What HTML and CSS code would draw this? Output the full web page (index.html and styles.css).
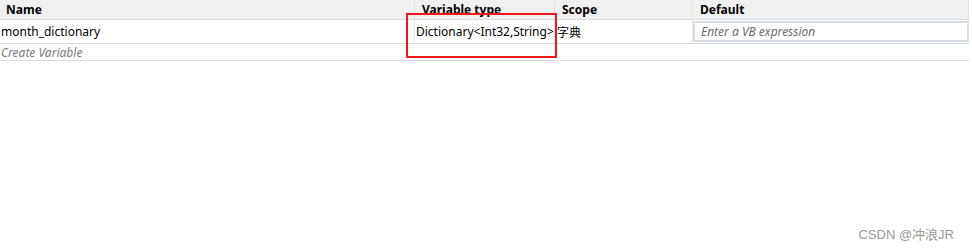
FILE: index.html
```html
<!DOCTYPE html>
<html lang="en">

<head>
    <meta charset="UTF-8">
    <title>Variables</title>
    <link rel="stylesheet" href="styles.css">
</head>

<body>
    <div class="vars">
        <div class="row head">
            <div class="cell name">Name</div>
            <div class="cell type">Variable type</div>
            <div class="cell scope">Scope</div>
            <div class="cell def">Default</div>
        </div>
        <div class="row item">
            <div class="cell name">month_dictionary</div>
            <div class="cell type">Dictionary&lt;Int32,String&gt;</div>
            <div class="cell scope">字典</div>
            <div class="cell def"><div class="expr">Enter a VB expression</div></div>
        </div>
        <div class="row create">
            <div class="cell name">Create Variable</div>
        </div>
        <div class="mark"></div>
    </div>
    <div class="watermark">CSDN @冲浪JR</div>
</body>

</html>
```

FILE: styles.css
```css
* {
    margin: 0;
    padding: 0;
    box-sizing: border-box;
}

body {
    font-family: 'Noto Sans', 'Noto Sans CJK SC', sans-serif;
    font-size: 12px;
    color: #000;
    background: #fff;
    width: 972px;
    height: 249px;
    position: relative;
    overflow: hidden;
}

.vars {
    position: relative;
    width: 969px;
}

.row {
    display: grid;
    grid-template-columns: 415px 140px 138px 276px;
    border-bottom: 1px solid #d6dde3;
}

.cell {
    display: flex;
    align-items: center;
    white-space: nowrap;
    overflow: hidden;
}

.head {
    height: 20px;
    background: #f0f0f0;
    font-weight: bold;
}

.head .cell {
    padding-left: 7px;
    border-right: 1px solid #e2e2e2;
}

.head .name {
    padding-left: 6px;
}

.item {
    height: 24px;
}

.item .cell {
    padding-left: 1px;
    border-right: 1px solid #e6eaee;
}

.item .scope {
    padding-left: 2px;
}

.item .def {
    padding: 1px 0;
    border-right: none;
}

.expr {
    width: 100%;
    height: 100%;
    border: 2px solid #d6dde3;
    padding-left: 6px;
    display: flex;
    align-items: center;
    font-style: italic;
    color: #6d6d6d;
}

.item .type {
    overflow: visible;
}

.create {
    height: 17px;
}

.create .cell {
    padding-left: 1px;
    font-style: italic;
    color: #7a7a7a;
}

.mark {
    position: absolute;
    left: 406px;
    top: 13px;
    width: 151px;
    height: 45px;
    border: 2px solid #f01818;
}

.watermark {
    position: absolute;
    right: 18px;
    top: 224px;
    font-family: 'Liberation Sans', 'Noto Sans CJK SC', sans-serif;
    font-size: 13px;
    color: #999;
}
```
